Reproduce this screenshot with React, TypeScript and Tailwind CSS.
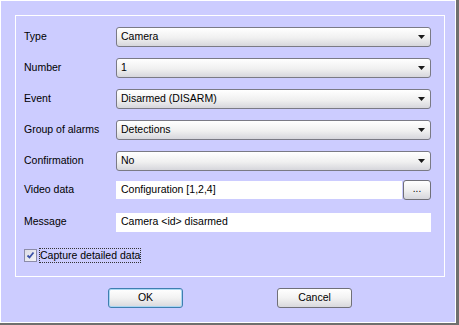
import { ReactNode } from "react";

const font = { fontFamily: '"Liberation Sans", Arial, sans-serif' };

function Arrow() {
  return (
    <svg width="7" height="4" viewBox="0 0 7 4" className="shrink-0">
      <path d="M0 0H7L3.5 4Z" fill="#1a1a1a" />
    </svg>
  );
}

function Select({ value }: { value: string }) {
  return (
    <div className="flex h-[20px] w-[315px] items-center justify-between rounded-[3px] border border-[#7a7a85] bg-[linear-gradient(#ffffff,#f0f0f0_55%,#d6d6dc)] pl-[4px] pr-[5px]">
      <span>{value}</span>
      <Arrow />
    </div>
  );
}

function Row({ label, children, mt }: { label: string; children: ReactNode; mt: string }) {
  return (
    <div className={`flex h-[20px] items-center ${mt}`}>
      <span className="w-[92px] shrink-0">{label}</span>
      {children}
    </div>
  );
}

function Button({ label, focused }: { label: string; focused?: boolean }) {
  return (
    <div
      className={`flex h-[20px] w-[75px] items-center justify-center rounded-[3px] border bg-[linear-gradient(#ffffff,#f2f2f2_50%,#d8d8dc)] ${
        focused ? "border-[#3f7fb0] shadow-[inset_0_0_0_1px_#a9d6f2]" : "border-[#707078]"
      }`}
    >
      {label}
    </div>
  );
}

export default function App() {
  return (
    <div style={font} className="h-[325px] w-[459px] text-[10.5px] text-black">
      <div className="h-full w-full border-r-[3px] border-b-[2px] border-[#6f6f6f]">
        <div className="flex h-full w-full flex-col border border-white bg-[#ccccff] pl-[14px] pt-[14px]">
          <div className="flex h-[262px] w-[430px] flex-col border border-white pl-[8px] pt-[11px]">
            <Row label="Type" mt="mt-0">
              <Select value="Camera" />
            </Row>
            <Row label="Number" mt="mt-[11px]">
              <Select value="1" />
            </Row>
            <Row label="Event" mt="mt-[11px]">
              <Select value="Disarmed (DISARM)" />
            </Row>
            <Row label="Group of alarms" mt="mt-[11px]">
              <Select value="Detections" />
            </Row>
            <Row label="Confirmation" mt="mt-[11px]">
              <Select value="No" />
            </Row>
            <Row label="Video data" mt="mt-[9px]">
              <div className="flex h-[18px] w-[286px] items-center bg-white pl-[5px]">
                Configuration [1,2,4]
              </div>
              <div className="ml-[1px] flex h-[20px] w-[28px] items-center justify-center rounded-[3px] border border-[#707078] bg-[linear-gradient(#ffffff,#f0f0f0_50%,#d6d6dc)] pb-[3px] text-[10px]">
                ...
              </div>
            </Row>
            <Row label="Message" mt="mt-[12px]">
              <div className="flex h-[19px] w-[315px] items-center bg-white pl-[5px]">
                Camera &lt;id&gt; disarmed
              </div>
            </Row>
            <div className="mt-[15px] flex h-[16px] items-center">
              <div className="flex h-[13px] w-[13px] items-center justify-center border border-[#8c8ca8] bg-[linear-gradient(135deg,#dcdce6,#f4f4f8)]">
                <svg width="9" height="9" viewBox="0 0 9 9">
                  <path d="M1.5 4.5L3.5 6.5L7.5 1.5" stroke="#3a52a8" strokeWidth="1.8" fill="none" />
                </svg>
              </div>
              <span className="ml-[2px] border border-dotted border-[#333] leading-[13px]">
                Capture detailed data
              </span>
            </div>
          </div>
          <div className="mt-[11px] flex pl-[93px]">
            <Button label="OK" focused />
            <div className="ml-[94px]">
              <Button label="Cancel" />
            </div>
          </div>
        </div>
      </div>
    </div>
  );
}
